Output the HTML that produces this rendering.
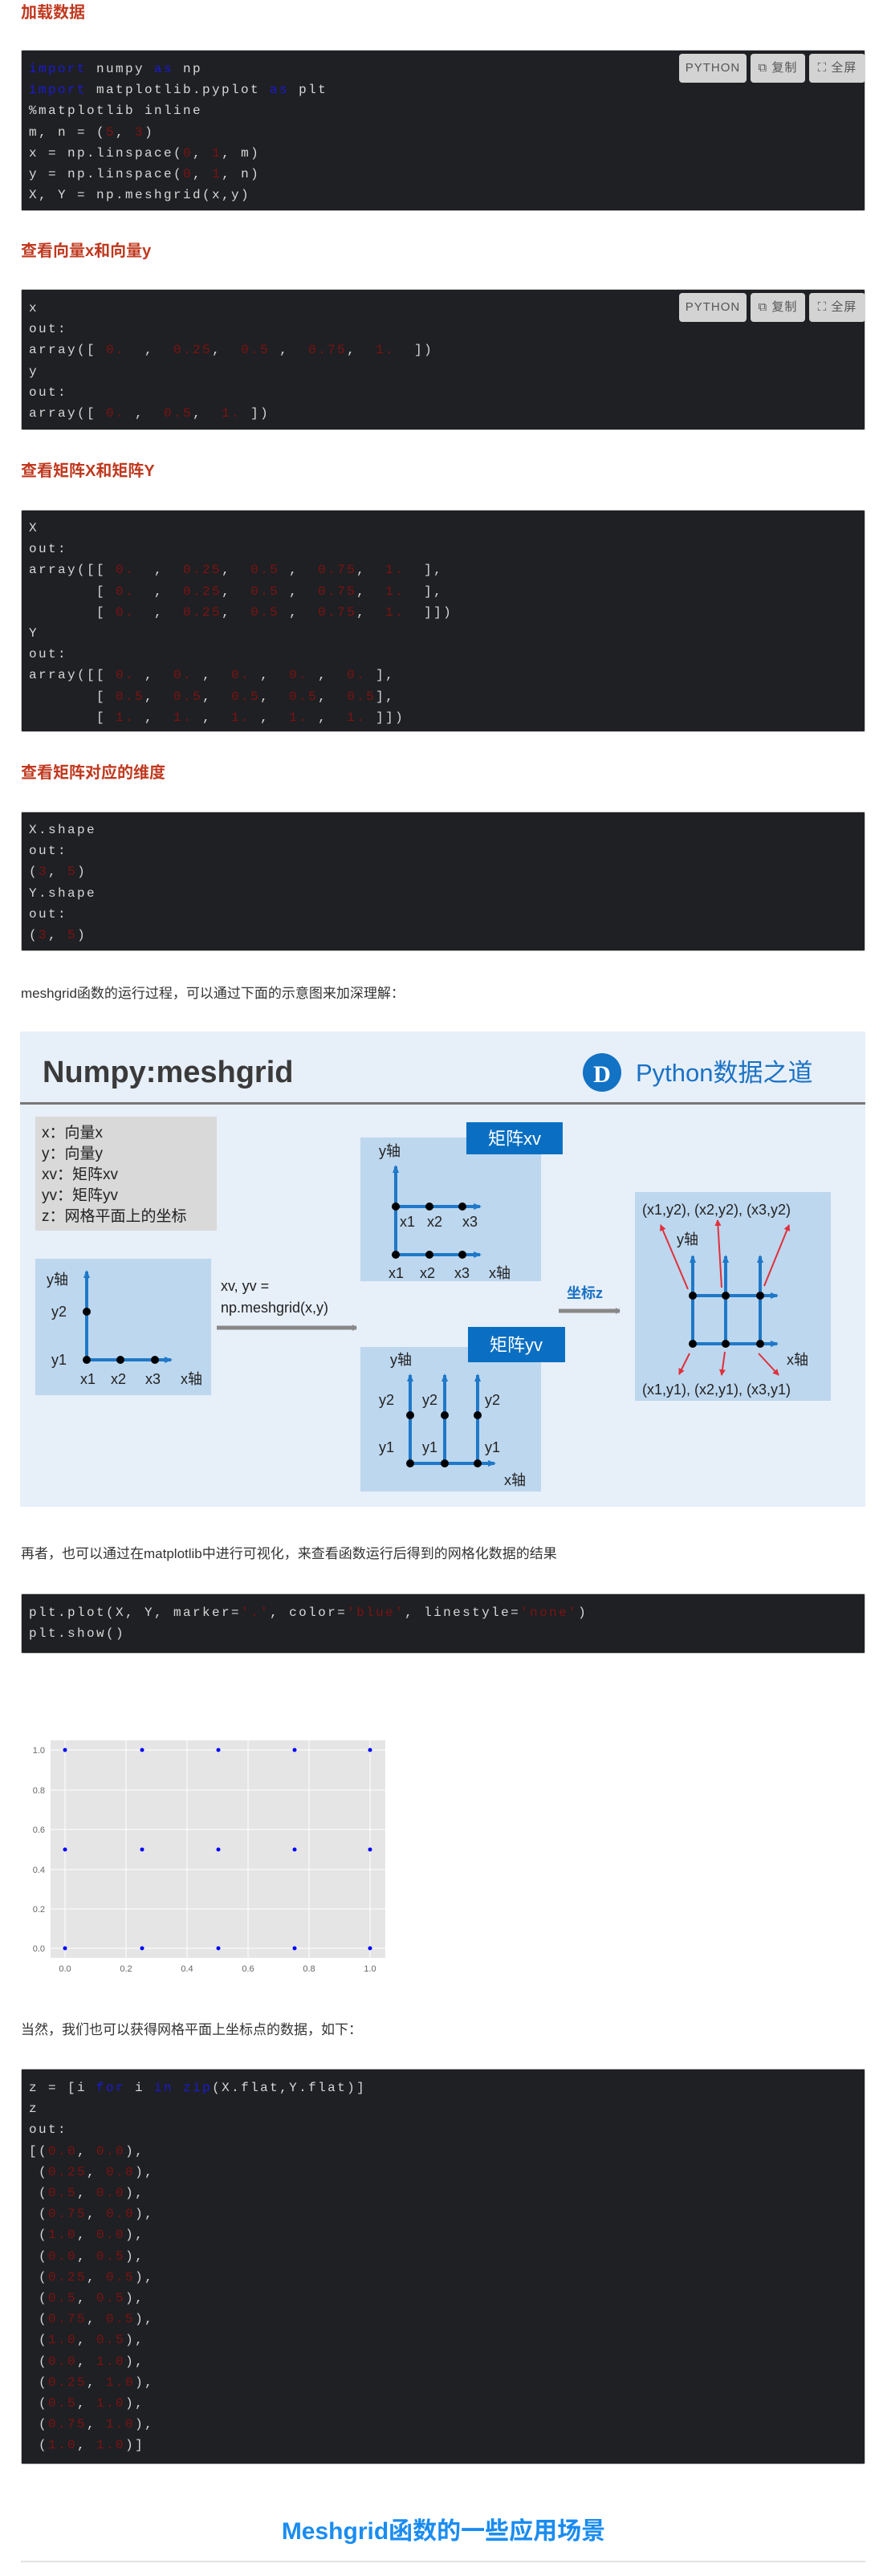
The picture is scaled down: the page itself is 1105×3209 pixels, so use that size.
<!DOCTYPE html>
<html><head><meta charset="utf-8"><style>
*{margin:0;padding:0;box-sizing:border-box}
body{width:1105px;height:3209px;position:relative;background:#fff;font-family:"Liberation Sans","Noto Sans CJK SC",sans-serif;overflow:hidden}
.h{position:absolute;left:26px;font-size:20px;font-weight:bold;color:#c0391f;line-height:28px}
.p{position:absolute;left:26px;font-size:17px;color:#333;line-height:26px}
.code{position:absolute;left:26px;width:1052px;background:#1f2023;border:1px solid #c8c8c8;border-radius:2px;padding:0 0 0 9px;font-family:"Liberation Mono","Noto Sans CJK SC",monospace;font-size:16px;letter-spacing:2.4px;line-height:26.2px;color:#d8d8d8;white-space:pre}
.n{color:#7d1212}.k{color:#1a1ad6}
.btn{position:absolute;height:36px;background:#d3d3d3;border-radius:4px;color:#555;font-size:15px;line-height:36px;text-align:center;letter-spacing:1px;font-family:"Liberation Sans","Noto Sans CJK SC",sans-serif}
</style></head><body>

<div class="h" style="top:2px">加载数据</div>
<div class="code" style="top:62px;height:201px;padding-top:10px"><span class="k">import</span> numpy <span class="k">as</span> np
<span class="k">import</span> matplotlib.pyplot <span class="k">as</span> plt
%matplotlib inline
m, n = (<span class="n">5</span>, <span class="n">3</span>)
x = np.linspace(<span class="n">0</span>, <span class="n">1</span>, m)
y = np.linspace(<span class="n">0</span>, <span class="n">1</span>, n)
X, Y = np.meshgrid(x,y)</div>
<div class="btn" style="left:846px;top:67px;width:84px">PYTHON</div>
<div class="btn" style="left:935px;top:67px;width:68px">⧉ 复制</div>
<div class="btn" style="left:1008px;top:67px;width:70px">⛶ 全屏</div>

<div class="h" style="top:299px">查看向量x和向量y</div>
<div class="code" style="top:360px;height:176px;padding-top:10px">x
out:
array([ <span class="n">0.</span>  ,  <span class="n">0.25</span>,  <span class="n">0.5</span> ,  <span class="n">0.75</span>,  <span class="n">1.</span>  ])
y
out:
array([ <span class="n">0.</span> ,  <span class="n">0.5</span>,  <span class="n">1.</span> ])</div>
<div class="btn" style="left:846px;top:365px;width:84px">PYTHON</div>
<div class="btn" style="left:935px;top:365px;width:68px">⧉ 复制</div>
<div class="btn" style="left:1008px;top:365px;width:70px">⛶ 全屏</div>

<div class="h" style="top:573px">查看矩阵X和矩阵Y</div>
<div class="code" style="top:635px;height:277px;padding-top:9px">X
out:
array([[ <span class="n">0.</span>  ,  <span class="n">0.25</span>,  <span class="n">0.5</span> ,  <span class="n">0.75</span>,  <span class="n">1.</span>  ],
       [ <span class="n">0.</span>  ,  <span class="n">0.25</span>,  <span class="n">0.5</span> ,  <span class="n">0.75</span>,  <span class="n">1.</span>  ],
       [ <span class="n">0.</span>  ,  <span class="n">0.25</span>,  <span class="n">0.5</span> ,  <span class="n">0.75</span>,  <span class="n">1.</span>  ]])
Y
out:
array([[ <span class="n">0.</span> ,  <span class="n">0.</span> ,  <span class="n">0.</span> ,  <span class="n">0.</span> ,  <span class="n">0.</span> ],
       [ <span class="n">0.5</span>,  <span class="n">0.5</span>,  <span class="n">0.5</span>,  <span class="n">0.5</span>,  <span class="n">0.5</span>],
       [ <span class="n">1.</span> ,  <span class="n">1.</span> ,  <span class="n">1.</span> ,  <span class="n">1.</span> ,  <span class="n">1.</span> ]])</div>

<div class="h" style="top:949px">查看矩阵对应的维度</div>
<div class="code" style="top:1011px;height:174px;padding-top:9px">X.shape
out:
(<span class="n">3</span>, <span class="n">5</span>)
Y.shape
out:
(<span class="n">3</span>, <span class="n">5</span>)</div>

<div class="p" style="top:1225px">meshgrid函数的运行过程，可以通过下面的示意图来加深理解：</div>

<div class="p" style="top:1923px">再者，也可以通过在matplotlib中进行可视化，来查看函数运行后得到的网格化数据的结果</div>
<div class="code" style="top:1985px;height:75px;padding-top:10px">plt.plot(X, Y, marker=<span class="n">'.'</span>, color=<span class="n">'blue'</span>, linestyle=<span class="n">'none'</span>)
plt.show()</div>

<div class="p" style="top:2516px">当然，我们也可以获得网格平面上坐标点的数据，如下：</div>
<div class="code" style="top:2577px;height:493px;padding-top:10px">z = [i <span class="k">for</span> i <span class="k">in</span> <span class="k">zip</span>(X.flat,Y.flat)]
z
out:
[(<span class="n">0.0</span>, <span class="n">0.0</span>),
 (<span class="n">0.25</span>, <span class="n">0.0</span>),
 (<span class="n">0.5</span>, <span class="n">0.0</span>),
 (<span class="n">0.75</span>, <span class="n">0.0</span>),
 (<span class="n">1.0</span>, <span class="n">0.0</span>),
 (<span class="n">0.0</span>, <span class="n">0.5</span>),
 (<span class="n">0.25</span>, <span class="n">0.5</span>),
 (<span class="n">0.5</span>, <span class="n">0.5</span>),
 (<span class="n">0.75</span>, <span class="n">0.5</span>),
 (<span class="n">1.0</span>, <span class="n">0.5</span>),
 (<span class="n">0.0</span>, <span class="n">1.0</span>),
 (<span class="n">0.25</span>, <span class="n">1.0</span>),
 (<span class="n">0.5</span>, <span class="n">1.0</span>),
 (<span class="n">0.75</span>, <span class="n">1.0</span>),
 (<span class="n">1.0</span>, <span class="n">1.0</span>)]</div>

<div style="position:absolute;left:0;width:1105px;top:3134px;text-align:center;font-size:30px;font-weight:bold;color:#1a8cf0;line-height:40px">Meshgrid函数的一些应用场景</div>
<div style="position:absolute;left:26px;width:1052px;top:3190px;height:2px;background:#e2e2e2"></div>

<svg style="position:absolute;left:0;top:0" width="1105" height="3209" font-family="Liberation Sans, Noto Sans CJK SC, sans-serif">
<defs>
<marker id="ab" markerUnits="userSpaceOnUse" markerWidth="10" markerHeight="8" refX="8" refY="4" orient="auto"><path d="M0,0 L10,4 L0,8z" fill="#1f78c8"/></marker>
<marker id="ar" markerUnits="userSpaceOnUse" markerWidth="8" markerHeight="8" refX="7" refY="4" orient="auto"><path d="M0,0 L8,4 L0,8z" fill="#e0303a"/></marker>
<marker id="ag" markerUnits="userSpaceOnUse" markerWidth="6" markerHeight="8" refX="5" refY="4" orient="auto"><path d="M0,0 L6,4 L0,8z" fill="#888"/></marker>
</defs>
<rect x="25" y="1285" width="1053" height="592" fill="#e7eff9"/>
<text x="53" y="1348" font-size="38" font-weight="bold" fill="#3a3a3a">Numpy:meshgrid</text>
<circle cx="750" cy="1336" r="24" fill="#1272c4"/>
<text x="750" y="1348" font-size="30" font-weight="bold" fill="#fff" text-anchor="middle" font-family="Liberation Serif, serif">D</text>
<text x="792" y="1347" font-size="31" fill="#1a72c4">Python数据之道</text>
<rect x="25" y="1373" width="1053" height="3" fill="#777"/>
<rect x="44" y="1391" width="226" height="142" fill="#d9d9d9"/>
<g font-size="19" fill="#222">
<text x="52" y="1417">x：向量x</text><text x="52" y="1443">y：向量y</text><text x="52" y="1469">xv：矩阵xv</text><text x="52" y="1495">yv：矩阵yv</text><text x="52" y="1521">z：网格平面上的坐标</text>
</g>
<rect x="44" y="1568" width="219" height="170" fill="#bdd7ee"/>
<g stroke="#1f78c8" stroke-width="4" fill="none">
<line x1="108" y1="1694" x2="108" y2="1584" marker-end="url(#ab)"/>
<line x1="108" y1="1694" x2="213" y2="1694" marker-end="url(#ab)"/>
</g>
<g fill="#000"><circle cx="108" cy="1634" r="5"/><circle cx="108" cy="1694" r="5"/><circle cx="150" cy="1694" r="5"/><circle cx="193" cy="1694" r="5"/></g>
<g font-size="18" fill="#222">
<text x="58" y="1600">y轴</text><text x="64" y="1640">y2</text><text x="64" y="1700">y1</text>
<text x="100" y="1724">x1</text><text x="138" y="1724">x2</text><text x="181" y="1724">x3</text><text x="225" y="1724">x轴</text>
<text x="275" y="1608">xv, yv =</text><text x="275" y="1635">np.meshgrid(x,y)</text>
</g>
<line x1="270" y1="1654" x2="444" y2="1654" stroke="#888" stroke-width="5" marker-end="url(#ag)"/>
<rect x="449" y="1417" width="225" height="179" fill="#bdd7ee"/>
<rect x="581" y="1398" width="120" height="40" fill="#0a6fc2"/>
<text x="641" y="1426" font-size="22" fill="#fff" text-anchor="middle">矩阵xv</text>
<g stroke="#1f78c8" stroke-width="4" fill="none">
<line x1="493" y1="1563" x2="493" y2="1453" marker-end="url(#ab)"/>
<line x1="493" y1="1503" x2="598" y2="1503" marker-end="url(#ab)"/>
<line x1="493" y1="1563" x2="598" y2="1563" marker-end="url(#ab)"/>
</g>
<g fill="#000"><circle cx="493" cy="1503" r="5"/><circle cx="535" cy="1503" r="5"/><circle cx="576" cy="1503" r="5"/><circle cx="493" cy="1563" r="5"/><circle cx="535" cy="1563" r="5"/><circle cx="576" cy="1563" r="5"/></g>
<g font-size="18" fill="#222">
<text x="472" y="1440">y轴</text>
<text x="498" y="1528">x1</text><text x="532" y="1528">x2</text><text x="576" y="1528">x3</text>
<text x="484" y="1592">x1</text><text x="523" y="1592">x2</text><text x="566" y="1592">x3</text><text x="609" y="1592">x轴</text>
</g>
<rect x="449" y="1678" width="225" height="180" fill="#bdd7ee"/>
<rect x="583" y="1653" width="121" height="44" fill="#0a6fc2"/>
<text x="643" y="1683" font-size="22" fill="#fff" text-anchor="middle">矩阵yv</text>
<g stroke="#1f78c8" stroke-width="4" fill="none">
<line x1="511" y1="1823" x2="511" y2="1713" marker-end="url(#ab)"/>
<line x1="554" y1="1823" x2="554" y2="1713" marker-end="url(#ab)"/>
<line x1="595" y1="1823" x2="595" y2="1713" marker-end="url(#ab)"/>
<line x1="511" y1="1823" x2="616" y2="1823" marker-end="url(#ab)"/>
</g>
<g fill="#000"><circle cx="511" cy="1763" r="5"/><circle cx="554" cy="1763" r="5"/><circle cx="595" cy="1763" r="5"/><circle cx="511" cy="1823" r="5"/><circle cx="554" cy="1823" r="5"/><circle cx="595" cy="1823" r="5"/></g>
<g font-size="18" fill="#222">
<text x="486" y="1700">y轴</text>
<text x="472" y="1750">y2</text><text x="526" y="1750">y2</text><text x="604" y="1750">y2</text>
<text x="472" y="1809">y1</text><text x="526" y="1809">y1</text><text x="604" y="1809">y1</text>
<text x="628" y="1850">x轴</text>
</g>
<text x="706" y="1617" font-size="18" font-weight="bold" fill="#1a72c4">坐标z</text>
<line x1="696" y1="1633" x2="772" y2="1633" stroke="#888" stroke-width="5" marker-end="url(#ag)"/>
<rect x="791" y="1485" width="244" height="260" fill="#bdd7ee"/>
<g stroke="#1f78c8" stroke-width="4" fill="none">
<line x1="863" y1="1674" x2="863" y2="1565" marker-end="url(#ab)"/>
<line x1="904" y1="1674" x2="904" y2="1565" marker-end="url(#ab)"/>
<line x1="947" y1="1674" x2="947" y2="1565" marker-end="url(#ab)"/>
<line x1="863" y1="1614" x2="968" y2="1614" marker-end="url(#ab)"/>
<line x1="863" y1="1674" x2="968" y2="1674" marker-end="url(#ab)"/>
</g>
<g fill="#000"><circle cx="863" cy="1614" r="5"/><circle cx="904" cy="1614" r="5"/><circle cx="947" cy="1614" r="5"/><circle cx="863" cy="1674" r="5"/><circle cx="904" cy="1674" r="5"/><circle cx="947" cy="1674" r="5"/></g>
<g stroke="#e0303a" stroke-width="2" fill="none">
<line x1="857" y1="1606" x2="823" y2="1526" marker-end="url(#ar)"/>
<line x1="899" y1="1604" x2="894" y2="1520" marker-end="url(#ar)"/>
<line x1="952" y1="1602" x2="983" y2="1526" marker-end="url(#ar)"/>
<line x1="859" y1="1686" x2="846" y2="1712" marker-end="url(#ar)"/>
<line x1="903" y1="1684" x2="899" y2="1713" marker-end="url(#ar)"/>
<line x1="945" y1="1686" x2="970" y2="1713" marker-end="url(#ar)"/>
</g>
<g font-size="18" fill="#222">
<text x="800" y="1513">(x1,y2), (x2,y2), (x3,y2)</text>
<text x="843" y="1550">y轴</text>
<text x="980" y="1700">x轴</text>
<text x="800" y="1737">(x1,y1), (x2,y1), (x3,y1)</text>
</g>
<rect x="63" y="2168" width="417" height="271" fill="#e5e5e5"/>
<g stroke="#fff" stroke-width="1">
<line x1="81" y1="2168" x2="81" y2="2439"/><line x1="157" y1="2168" x2="157" y2="2439"/><line x1="233" y1="2168" x2="233" y2="2439"/><line x1="309" y1="2168" x2="309" y2="2439"/><line x1="385" y1="2168" x2="385" y2="2439"/><line x1="461" y1="2168" x2="461" y2="2439"/>
<line x1="63" y1="2180" x2="480" y2="2180"/><line x1="63" y1="2230" x2="480" y2="2230"/><line x1="63" y1="2279" x2="480" y2="2279"/><line x1="63" y1="2329" x2="480" y2="2329"/><line x1="63" y1="2378" x2="480" y2="2378"/><line x1="63" y1="2427" x2="480" y2="2427"/>
</g>
<g fill="#0000ff">
<circle cx="81" cy="2180" r="2.5"/><circle cx="177" cy="2180" r="2.5"/><circle cx="272" cy="2180" r="2.5"/><circle cx="367" cy="2180" r="2.5"/><circle cx="461" cy="2180" r="2.5"/>
<circle cx="81" cy="2304" r="2.5"/><circle cx="177" cy="2304" r="2.5"/><circle cx="272" cy="2304" r="2.5"/><circle cx="367" cy="2304" r="2.5"/><circle cx="461" cy="2304" r="2.5"/>
<circle cx="81" cy="2427" r="2.5"/><circle cx="177" cy="2427" r="2.5"/><circle cx="272" cy="2427" r="2.5"/><circle cx="367" cy="2427" r="2.5"/><circle cx="461" cy="2427" r="2.5"/>
</g>
<g font-size="11" fill="#666" text-anchor="end">
<text x="56" y="2184">1.0</text><text x="56" y="2234">0.8</text><text x="56" y="2283">0.6</text><text x="56" y="2333">0.4</text><text x="56" y="2382">0.2</text><text x="56" y="2431">0.0</text>
</g>
<g font-size="11" fill="#666" text-anchor="middle">
<text x="81" y="2456">0.0</text><text x="157" y="2456">0.2</text><text x="233" y="2456">0.4</text><text x="309" y="2456">0.6</text><text x="385" y="2456">0.8</text><text x="461" y="2456">1.0</text>
</g>
</svg>
</body></html>
